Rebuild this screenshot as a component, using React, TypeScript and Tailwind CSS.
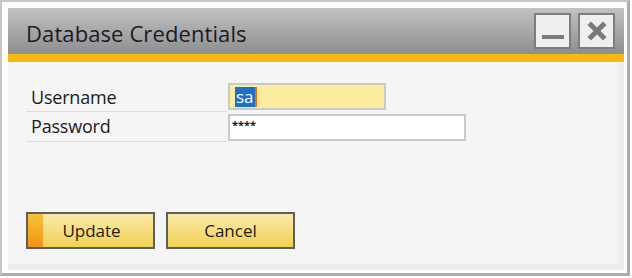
export default function App() {
  return (
    <div className="w-[632px] h-[278px] bg-white" style={{ fontFamily: '"Open Sans", "Liberation Sans", sans-serif' }}>
      <div className="w-[630px] h-[276px] border-l-2 border-t-2 border-r-[3px] border-b-[3px] border-l-[#c6c6c6] border-t-[#c6c6c6] border-r-[#aeaeae] border-b-[#aeaeae] pl-[6px] pt-[6px] pr-[3px] pb-[3px] flex flex-col">
        {/* Title bar */}
        <div className="h-[46px] shrink-0 flex items-center justify-between pl-[18px] pr-[9px] bg-gradient-to-b from-[#c2c2c2] to-[#8e8e8e]">
          <span className="text-[22px] text-[#1a1a2a] tracking-[0.1px] pt-[4px]">Database Credentials</span>
          <div className="flex gap-[7px]">
            <button className="w-[37px] h-[36px] bg-[#efefef] border-2 border-[#7d7d7d] flex items-end justify-center pb-[8px]">
              <span className="block w-[22px] h-[4px] bg-[#7a7a7a]" />
            </button>
            <button className="w-[37px] h-[36px] bg-[#efefef] border-2 border-[#7d7d7d] flex items-center justify-center">
              <svg width="20" height="20" viewBox="0 0 20 20">
                <path d="M4 4 L16 16 M16 4 L4 16" stroke="#7a7a7a" strokeWidth="5" strokeLinecap="square" />
              </svg>
            </button>
          </div>
        </div>
        {/* Accent strip */}
        <div className="h-[8px] shrink-0 bg-[#f7b90f]" />
        {/* Content */}
        <div className="flex-1 bg-[#ededed] pr-[6px] pb-[6px] flex">
          <div className="flex-1 bg-[#f5f5f5] flex flex-col pl-[18px] pt-[20px]">
            <div className="flex flex-col text-[18px] text-[#1c1c1c]">
              <div className="flex items-center h-[30px]">
                <div className="w-[201px] h-full border-b border-[#dcdcdc] flex items-center pl-[5px] pt-[2px] tracking-[-0.2px]">Username</div>
                <div className="w-[158px] h-[27px] ml-[1px] mb-[1px] bg-[#fcec9e] border-2 border-[#c9c9c9] flex items-center pl-[5px]">
                  <span className="bg-[#1e6fc9] text-white leading-[20px] px-[1px] text-[17px]">sa</span>
                  <span className="block w-[2px] h-[20px] bg-[#e8730c]" />
                </div>
              </div>
              <div className="flex items-center h-[30px]">
                <div className="w-[201px] h-full border-b border-[#dcdcdc] flex items-center pl-[5px] tracking-[-0.2px]">Password</div>
                <div className="w-[238px] h-[27px] ml-[1px] bg-white border-2 border-[#c9c9c9] flex items-start pl-[2px] pt-[3px] text-[11px] font-bold leading-none">
                  ****
                </div>
              </div>
            </div>
            <div className="flex gap-[11px] mt-[70px]">
              <button className="w-[129px] h-[37px] border-2 border-[#5e5e5e] bg-gradient-to-b from-[#fae9a9] to-[#f1d24d] flex text-[17px] text-[#1c1c1c]">
                <span className="w-[15px] h-full bg-gradient-to-b from-[#f7c238] to-[#f19414]" />
                <span className="flex-1 flex items-center justify-center pr-[13px]">Update</span>
              </button>
              <button className="w-[129px] h-[37px] border-2 border-[#5e5e5e] bg-gradient-to-b from-[#fae9a9] to-[#f1d24d] flex items-center justify-center text-[17px] text-[#1c1c1c]">
                Cancel
              </button>
            </div>
          </div>
        </div>
      </div>
    </div>
  );
}
